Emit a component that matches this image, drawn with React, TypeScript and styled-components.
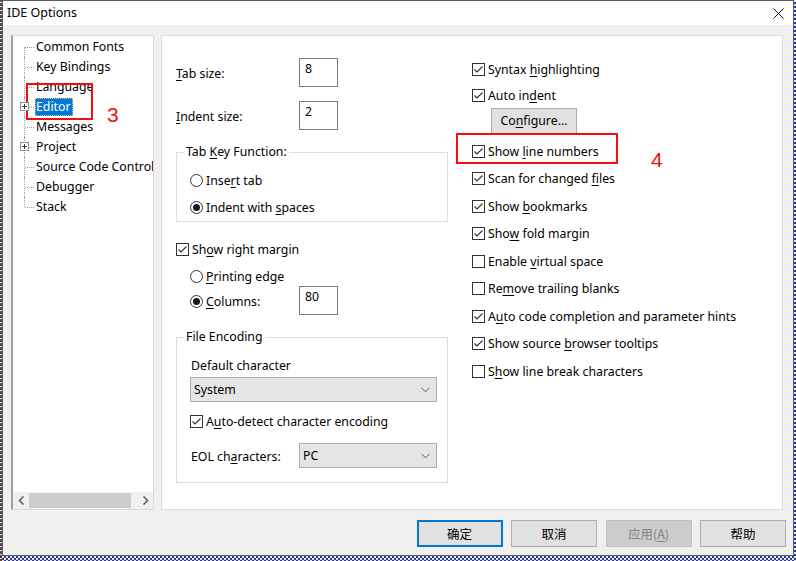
import React from 'react';
import styled, { createGlobalStyle } from 'styled-components';

const GlobalStyle = createGlobalStyle`
  html, body {
    margin: 0;
    padding: 0;
  }
  body {
    font-family: 'Noto Sans', 'Noto Sans CJK SC', sans-serif;
    font-size: 12.3px;
    color: #000;
  }
`;

const Desktop = styled.div`
  width: 796px;
  height: 561px;
  overflow: hidden;
  box-sizing: border-box;
  border-left: 2px dotted #6b4a22;
  background: repeating-conic-gradient(#2b3a8c 0 25%, #e6e6f0 0 50%) 0 0 / 4px 4px;
`;

const Window = styled.div`
  position: relative;
  width: 792px;
  height: 556px;
  box-sizing: border-box;
  border: 1px solid #5c5c5c;
  background: #f0f0f0;
  display: flex;
  flex-direction: column;
`;

const TitleBar = styled.div`
  height: 24px;
  background: #fff;
  display: flex;
  align-items: center;
  justify-content: space-between;
  padding-left: 4px;
`;

const Title = styled.span`
  font-size: 12.5px;
  margin-top: -2px;
`;

const CloseButton = styled.div`
  width: 30px;
  height: 24px;
  display: flex;
  align-items: center;
  justify-content: center;
`;

const Body = styled.div`
  flex: 1;
  display: flex;
  flex-direction: column;
  padding: 10px 10px 0 8px;
`;

const Main = styled.div`
  display: flex;
  gap: 7px;
  height: 475px;
`;

const Tree = styled.div`
  width: 143px;
  box-sizing: border-box;
  background: #fff;
  border: 1px solid #dadada;
  border-left: 2px solid #a0a0a0;
  display: flex;
  flex-direction: column;
  overflow: hidden;
`;

const TreeList = styled.div`
  flex: 1;
  padding-top: 1px;
`;

const TreeRow = styled.div`
  height: 20px;
  display: flex;
  align-items: center;
  white-space: nowrap;
`;

const Connector = styled.span<{ $first?: boolean; $last?: boolean }>`
  position: relative;
  width: 22px;
  height: 100%;
  flex: none;
  &::before {
    content: '';
    position: absolute;
    left: 11px;
    top: ${p => (p.$first ? '50%' : '0')};
    bottom: ${p => (p.$last ? '50%' : '0')};
    border-left: 1px dotted #a0a0a0;
  }
  &::after {
    content: '';
    position: absolute;
    left: 12px;
    width: 9px;
    top: 50%;
    border-top: 1px dotted #a0a0a0;
  }
`;

const Expander = styled.span`
  position: absolute;
  left: 7px;
  top: 5px;
  width: 9px;
  height: 9px;
  box-sizing: border-box;
  border: 1px solid #919191;
  background: #fff;
  z-index: 1;
  display: flex;
  align-items: center;
  justify-content: center;
`;

const TreeLabel = styled.span<{ $selected?: boolean }>`
  height: 18px;
  line-height: 18px;
  padding: 0 2px 0 1px;
  background: ${p => (p.$selected ? '#0078d7' : 'transparent')};
  color: ${p => (p.$selected ? '#fff' : '#000')};
  outline: ${p => (p.$selected ? '1px dotted #e8c070' : 'none')};
  outline-offset: -1px;
`;

const HScroll = styled.div`
  height: 17px;
  background: #f0f0f0;
  display: flex;
  align-items: center;
`;

const ScrollArrow = styled.span`
  width: 16px;
  height: 17px;
  display: flex;
  align-items: center;
  justify-content: center;
  flex: none;
`;

const ScrollTrack = styled.div`
  flex: 1;
  height: 100%;
  display: flex;
  align-items: center;
`;

const ScrollThumb = styled.div`
  width: 102px;
  height: 15px;
  background: #cdcdcd;
`;

const Panel = styled.div`
  width: 622px;
  box-sizing: border-box;
  background: #fff;
  border: 1px solid #dcdcdc;
  display: flex;
  gap: 24px;
  padding: 0 0 0 14px;
`;

const LeftCol = styled.div`
  width: 272px;
  display: flex;
  flex-direction: column;
  padding-top: 22px;
`;

const RightCol = styled.div`
  display: flex;
  flex-direction: column;
  padding-top: 20px;
`;

const Row = styled.div<{ $h?: number; $mt?: number; $indent?: number }>`
  display: flex;
  align-items: center;
  height: ${p => p.$h ?? 20}px;
  margin-top: ${p => p.$mt ?? 0}px;
  padding-left: ${p => p.$indent ?? 0}px;
  white-space: nowrap;
`;

const FieldLabel = styled.span<{ $w: number }>`
  width: ${p => p.$w}px;
  flex: none;
  padding-top: 2px;
`;

const NumInput = styled.div`
  width: 39px;
  height: 29px;
  box-sizing: border-box;
  border: 1px solid #7a7a7a;
  padding: 1px 5px;
  line-height: 18px;
  align-self: flex-start;
`;

const Group = styled.fieldset<{ $pt: number; $pb: number; $mt: number }>`
  margin: ${p => p.$mt}px 0 0 0;
  border: 1px solid #dcdcdc;
  padding: ${p => p.$pt}px 10px ${p => p.$pb}px 13px;
  min-width: 0;
`;

const Legend = styled.legend`
  padding: 0 2px;
  margin-left: -6px;
  line-height: 16px;
`;

const Select = styled.div<{ $w: number }>`
  width: ${p => p.$w}px;
  height: 25px;
  box-sizing: border-box;
  background: #e5e5e5;
  border: 1px solid #adadad;
  display: flex;
  align-items: center;
  justify-content: space-between;
  padding: 0 6px 0 3px;
`;

const Box = styled.span`
  width: 13px;
  height: 13px;
  box-sizing: border-box;
  border: 1px solid #333;
  background: #fff;
  flex: none;
  margin-right: 3px;
  display: flex;
  align-items: center;
  justify-content: center;
`;

const RadioCircle = styled.span`
  width: 13px;
  height: 13px;
  box-sizing: border-box;
  border: 1px solid #333;
  border-radius: 50%;
  background: #fff;
  flex: none;
  margin-right: 3px;
  display: flex;
  align-items: center;
  justify-content: center;
`;

const RadioDot = styled.span`
  width: 7px;
  height: 7px;
  border-radius: 50%;
  background: #1a1a1a;
`;

const U = styled.span`
  text-decoration: underline;
  text-underline-offset: 2px;
`;

const Button = styled.div<{ $focused?: boolean; $disabled?: boolean }>`
  width: 86px;
  height: 27px;
  box-sizing: border-box;
  display: flex;
  align-items: center;
  justify-content: center;
  background: ${p => (p.$disabled ? '#cccccc' : '#e1e1e1')};
  color: ${p => (p.$disabled ? '#838383' : '#000')};
  border: ${p => (p.$focused ? '2px solid #0078d7' : p.$disabled ? '1px solid #bfbfbf' : '1px solid #adadad')};
  font-family: 'Noto Sans CJK SC', 'Noto Sans', sans-serif;
  font-size: 12.5px;
`;

const ConfigureButton = styled(Button)`
  height: 26px;
  margin-left: 19px;
  font-family: 'Noto Sans', sans-serif;
  font-size: 12.3px;
`;

const ButtonBar = styled.div`
  display: flex;
  justify-content: flex-end;
  gap: 8.5px;
  margin: 10px -3px 0 0;
`;

const RedBox = styled.div<{ $x: number; $y: number; $w: number; $h: number }>`
  position: absolute;
  left: ${p => p.$x}px;
  top: ${p => p.$y}px;
  width: ${p => p.$w}px;
  height: ${p => p.$h}px;
  box-sizing: border-box;
  border: 2px solid #f01010;
`;

const RedNumber = styled.span<{ $x: number; $y: number }>`
  position: absolute;
  left: ${p => p.$x}px;
  top: ${p => p.$y}px;
  color: #f01010;
  font-family: 'Liberation Sans', sans-serif;
  font-size: 21px;
  line-height: 24px;
`;

const CheckMark = () => (
  <svg width="11" height="11" viewBox="0 0 11 11">
    <polyline points="1.5,5.5 4,8 9.5,2.5" fill="none" stroke="#333" strokeWidth="1.2" />
  </svg>
);

const Checkbox = ({ checked, children }: { checked?: boolean; children: React.ReactNode }) => (
  <>
    <Box>{checked && <CheckMark />}</Box>
    <span>{children}</span>
  </>
);

const Radio = ({ checked, children }: { checked?: boolean; children: React.ReactNode }) => (
  <>
    <RadioCircle>{checked && <RadioDot />}</RadioCircle>
    <span>{children}</span>
  </>
);

const Chevron = () => (
  <svg width="9" height="6" viewBox="0 0 9 6">
    <polyline points="0.5,0.8 4.5,4.8 8.5,0.8" fill="none" stroke="#555" strokeWidth="1" />
  </svg>
);

const treeItems = [
  { label: 'Common Fonts' },
  { label: 'Key Bindings' },
  { label: 'Language' },
  { label: 'Editor', expandable: true, selected: true },
  { label: 'Messages' },
  { label: 'Project', expandable: true },
  { label: 'Source Code Control' },
  { label: 'Debugger' },
  { label: 'Stack' },
];

const rightOptions: { checked: boolean; content: React.ReactNode }[] = [
  { checked: true, content: <>Show <U>l</U>ine numbers</> },
  { checked: true, content: <>Scan for changed <U>f</U>iles</> },
  { checked: true, content: <>Show <U>b</U>ookmarks</> },
  { checked: true, content: <>Sho<U>w</U> fold margin</> },
  { checked: false, content: <>Enable <U>v</U>irtual space</> },
  { checked: false, content: <>Re<U>m</U>ove trailing blanks</> },
  { checked: true, content: <>A<U>u</U>to code completion and parameter hints</> },
  { checked: true, content: <>Show source <U>b</U>rowser tooltips</> },
  { checked: false, content: <>S<U>h</U>ow line break characters</> },
];

export default function App() {
  return (
    <>
      <GlobalStyle />
      <Desktop>
        <Window>
          <TitleBar>
            <Title>IDE Options</Title>
            <CloseButton>
              <svg width="11" height="11" viewBox="0 0 11 11">
                <path d="M0.5 0.5 L10.5 10.5 M10.5 0.5 L0.5 10.5" stroke="#111" strokeWidth="1" />
              </svg>
            </CloseButton>
          </TitleBar>
          <Body>
            <Main>
              <Tree>
                <TreeList>
                  {treeItems.map((item, i) => (
                    <TreeRow key={item.label}>
                      <Connector $first={i === 0} $last={i === treeItems.length - 1}>
                        {item.expandable && (
                          <Expander>
                            <svg width="7" height="7" viewBox="0 0 7 7">
                              <path d="M1 3.5 H6 M3.5 1 V6" stroke="#333" strokeWidth="1" />
                            </svg>
                          </Expander>
                        )}
                      </Connector>
                      <TreeLabel $selected={item.selected}>{item.label}</TreeLabel>
                    </TreeRow>
                  ))}
                </TreeList>
                <HScroll>
                  <ScrollArrow>
                    <svg width="7" height="9" viewBox="0 0 7 9">
                      <polyline points="5.5,0.5 1.5,4.5 5.5,8.5" fill="none" stroke="#606060" strokeWidth="1.6" />
                    </svg>
                  </ScrollArrow>
                  <ScrollTrack>
                    <ScrollThumb />
                  </ScrollTrack>
                  <ScrollArrow>
                    <svg width="7" height="9" viewBox="0 0 7 9">
                      <polyline points="1.5,0.5 5.5,4.5 1.5,8.5" fill="none" stroke="#606060" strokeWidth="1.6" />
                    </svg>
                  </ScrollArrow>
                </HScroll>
              </Tree>

              <Panel>
                <LeftCol>
                  <Row $h={29}>
                    <FieldLabel $w={123}><U>T</U>ab size:</FieldLabel>
                    <NumInput>8</NumInput>
                  </Row>
                  <Row $h={29} $mt={14}>
                    <FieldLabel $w={123}><U>I</U>ndent size:</FieldLabel>
                    <NumInput>2</NumInput>
                  </Row>

                  <Group $mt={14} $pt={10} $pb={4}>
                    <Legend>Tab <U>K</U>ey Function:</Legend>
                    <Row>
                      <Radio>Inse<U>r</U>t tab</Radio>
                    </Row>
                    <Row $mt={7}>
                      <Radio checked>Indent with <U>s</U>paces</Radio>
                    </Row>
                  </Group>

                  <Row $mt={17}>
                    <Checkbox checked>Sh<U>o</U>w right margin</Checkbox>
                  </Row>
                  <Row $mt={7} $indent={14}>
                    <Radio><U>P</U>rinting edge</Radio>
                  </Row>
                  <Row $h={29} $indent={14}>
                    <FieldLabel $w={109}>
                      <Row>
                        <Radio checked><U>C</U>olumns:</Radio>
                      </Row>
                    </FieldLabel>
                    <NumInput>80</NumInput>
                  </Row>

                  <Group $mt={14} $pt={10} $pb={14}>
                    <Legend>File Encoding</Legend>
                    <Row $indent={1}>Default character</Row>
                    <Row $h={25} $mt={2}>
                      <Select $w={247}>
                        <span>System</span>
                        <Chevron />
                      </Select>
                    </Row>
                    <Row $mt={9}>
                      <Checkbox checked>A<U>u</U>to-detect character encoding</Checkbox>
                    </Row>
                    <Row $h={25} $mt={12} $indent={1}>
                      <FieldLabel $w={108}>EOL ch<U>a</U>racters:</FieldLabel>
                      <Select $w={138}>
                        <span>PC</span>
                        <Chevron />
                      </Select>
                    </Row>
                  </Group>
                </LeftCol>

                <RightCol>
                  <Row $h={27.5}>
                    <Checkbox checked>Syntax <U>h</U>ighlighting</Checkbox>
                  </Row>
                  <Row $h={24}>
                    <Checkbox checked>Auto in<U>d</U>ent</Checkbox>
                  </Row>
                  <Row $h={26}>
                    <ConfigureButton>Co<U>n</U>figure...</ConfigureButton>
                  </Row>
                  <Row $h={27.5} $mt={4}>
                    <Checkbox checked>{rightOptions[0].content}</Checkbox>
                  </Row>
                  {rightOptions.slice(1).map((opt, i) => (
                    <Row key={i} $h={27.5}>
                      <Checkbox checked={opt.checked}>{opt.content}</Checkbox>
                    </Row>
                  ))}
                </RightCol>
              </Panel>
            </Main>

            <ButtonBar>
              <Button $focused>确定</Button>
              <Button>取消</Button>
              <Button $disabled>应用(<U>A</U>)</Button>
              <Button>帮助</Button>
            </ButtonBar>
          </Body>

          <RedBox $x={23} $y={82} $w={67} $h={37} />
          <RedNumber $x={104} $y={102}>3</RedNumber>
          <RedBox $x={453} $y={132} $w={162} $h={31} />
          <RedNumber $x={648} $y={147}>4</RedNumber>
        </Window>
      </Desktop>
    </>
  );
}
